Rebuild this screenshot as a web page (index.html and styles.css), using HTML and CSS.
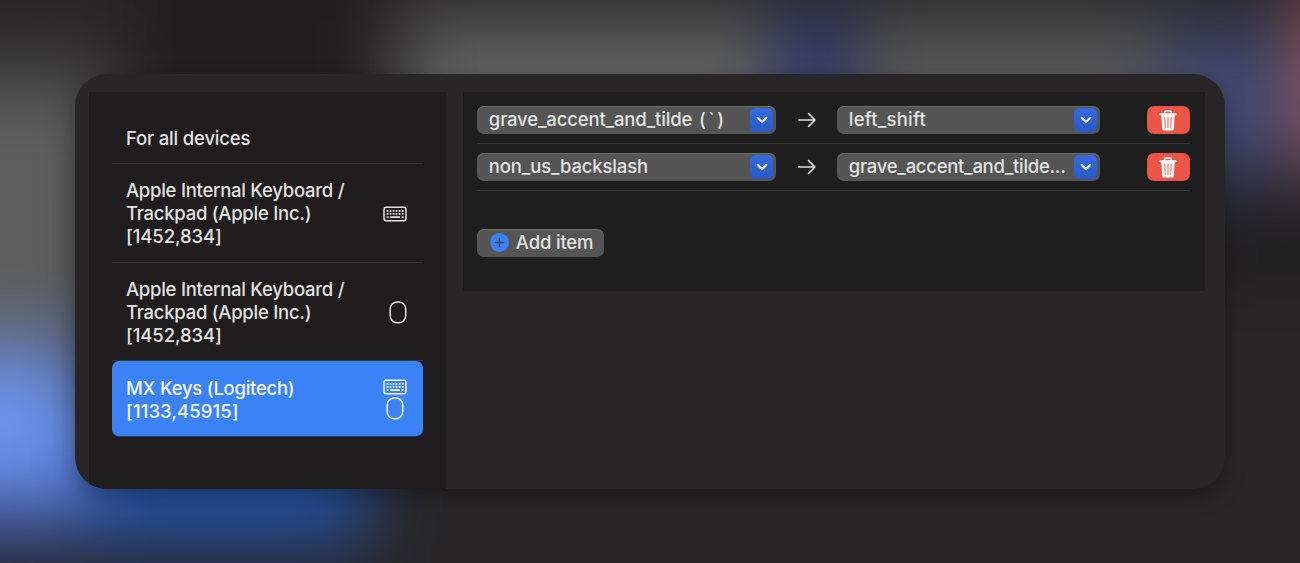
FILE: index.html
```html
<!DOCTYPE html>
<html lang="en">
<head>
<meta charset="utf-8">
<title>Simple modifications</title>
<link rel="stylesheet" href="styles.css">
</head>
<body>
<svg class="defs" width="0" height="0" aria-hidden="true">
  <symbol id="keyboard" viewBox="0 0 24 16">
    <rect x="1" y="1.300" width="22" height="13.400" rx="2.200" fill="none" stroke="currentColor" stroke-width="1.500"/>
    <path d="M3.600 4.800h17M3.600 7.900h17" stroke="currentColor" stroke-width="1.700" stroke-dasharray="1.800 1.240"/>
    <path d="M3.600 11.100h1.800M7 11.100h10M18.700 11.100h1.800" stroke="currentColor" stroke-width="1.600"/>
  </symbol>
  <symbol id="mouse" viewBox="0 0 18 23">
    <rect x="1.200" y="1" width="15.500" height="20.800" rx="7" fill="none" stroke="currentColor" stroke-width="1.500"/>
  </symbol>
  <symbol id="arrow" viewBox="0 0 18 16">
    <path d="M.8 8h16M10.600 1.600 17 8l-6.400 6.400" fill="none" stroke="currentColor" stroke-width="1.500" stroke-linecap="round" stroke-linejoin="round"/>
  </symbol>
  <symbol id="chevron" viewBox="0 0 12 8">
    <path d="M1.700 1.700 6 6.200l4.300-4.500" fill="none" stroke="currentColor" stroke-width="2" stroke-linecap="round" stroke-linejoin="round"/>
  </symbol>
  <symbol id="trash" viewBox="0 0 18 21">
    <path d="M5.700 3.800V2.200Q5.700 1 6.900 1h4.200q1.200 0 1.200 1.200V3.800" fill="none" stroke="currentColor" stroke-width="1.500"/>
    <path d="M1.300 4.200h15.400" stroke="currentColor" stroke-width="2" stroke-linecap="round"/>
    <path fill="currentColor" fill-rule="evenodd" d="M2.300 4.500h13.400l-.9 14.500q-.1 1.600-1.700 1.600H4.900q-1.600 0-1.700-1.600ZM5.300 7l.5 11h.9L6.300 7ZM8.500 7V18h1V7ZM11.700 7 11.300 18h.9l.5-11Z"/>
  </symbol>
</svg>
<svg class="backdrop" viewBox="0 0 1300 563" aria-hidden="true">
  <filter id="soft" filterUnits="userSpaceOnUse" x="-200" y="-200" width="1700" height="960" color-interpolation-filters="sRGB"><feGaussianBlur stdDeviation="36 40"/></filter>
  <g filter="url(#soft)">
    <rect x="-200" y="-200" width="1700" height="960" fill="#282627"/>
    <rect x="140" y="-200" width="240" height="400" fill="#211e1f"/>
    <rect x="-200" y="75" width="310" height="265" fill="#5e5e5e"/>
    <rect x="-200" y="345" width="290" height="158" fill="#6c92ea"/>
    <rect x="90" y="420" width="278" height="122" fill="#2452a8"/>
    <rect x="-200" y="503" width="290" height="48" fill="#304282"/>
    <rect x="400" y="20" width="378" height="200" fill="#636363"/>
    <rect x="778" y="10" width="72" height="210" fill="#28336c"/>
    <rect x="850" y="22" width="310" height="200" fill="#5a5a5a"/>
    <rect x="1160" y="30" width="140" height="144" fill="#404974"/>
    <rect x="1297" y="-10" width="200" height="180" fill="#985052"/>
    <rect x="1200" y="200" width="300" height="70" fill="#1d1c1d"/>
  </g>
</svg>
<main class="window">
  <nav class="sidebar">
    <div class="device device-all"><span class="name">For all devices</span></div>
    <div class="device">
      <span class="name">Apple Internal Keyboard /<br>Trackpad (Apple Inc.)<br><span class="ids">[1452,834]</span></span>
      <span class="icons"><svg class="keyboard"><use href="#keyboard"/></svg></span>
    </div>
    <div class="device">
      <span class="name">Apple Internal Keyboard /<br>Trackpad (Apple Inc.)<br><span class="ids">[1452,834]</span></span>
      <span class="icons"><svg class="mouse"><use href="#mouse"/></svg></span>
    </div>
    <div class="device selected">
      <span class="name">MX Keys (Logitech)<br><span class="ids">[1133,45915]</span></span>
      <span class="icons"><svg class="keyboard"><use href="#keyboard"/></svg><svg class="mouse"><use href="#mouse"/></svg></span>
    </div>
  </nav>
  <section class="content">
    <div class="mapping">
      <button class="select from"><span>grave_accent_and_tilde <span class="symbol">(`)</span></span><i class="cap"><svg><use href="#chevron"/></svg></i></button>
      <svg class="arrow"><use href="#arrow"/></svg>
      <button class="select to"><span class="wide">left_shift</span><i class="cap"><svg><use href="#chevron"/></svg></i></button>
      <button class="delete"><svg><use href="#trash"/></svg></button>
    </div>
    <div class="mapping">
      <button class="select from"><span>non_us_backslash</span><i class="cap"><svg><use href="#chevron"/></svg></i></button>
      <svg class="arrow"><use href="#arrow"/></svg>
      <button class="select to"><span class="clipped">grave_accent_and_tilde...</span><i class="cap"><svg><use href="#chevron"/></svg></i></button>
      <button class="delete"><svg><use href="#trash"/></svg></button>
    </div>
    <button class="add">
      <svg viewBox="0 0 19 19"><circle cx="9.500" cy="9.500" r="9.400" fill="#3b82f7"/><path d="M5.300 9.500h8.400M9.500 5.300v8.400" stroke="#3c4658" stroke-width="1.400" stroke-linecap="round"/></svg>
      <span>Add item</span>
    </button>
  </section>
</main>
</body>
</html>
```
FILE: styles.css
```css
* { box-sizing: border-box; }

body {
  margin: 0;
  width: 1300px;
  height: 563px;
  padding: 74px 75.500px 0 74.500px;
  overflow: hidden;
  font: 450 18.500px/23px Inter, "Liberation Sans", sans-serif;
  letter-spacing: -0.260px;
  color: #e2e2e2;
  background: #282627;
}

.defs { position: absolute; }
svg { display: block; flex: none; }

.backdrop {
  position: absolute;
  top: 0;
  left: 0;
  width: 1300px;
  height: 563px;
}

.window {
  position: relative;
  display: flex;
  align-items: flex-start;
  width: 1150px;
  height: 414.500px;
  padding: 17.500px 20px 0 14.500px;
  border-radius: 32px;
  overflow: hidden;
  background: #282627;
  box-shadow: 0 8px 22px rgba(0, 0, 0, .3);
}

.sidebar {
  width: 357px;
  height: 397px;
  padding: 21.500px 23px 0 22.500px;
  background: #1f1d1d;
}

.device {
  display: flex;
  align-items: center;
  justify-content: space-between;
  height: 98.500px;
  padding: 2px 16px 0 14.500px;
  border-bottom: 1px solid #363636;
}
.device-all { height: 51px; padding-top: 0; letter-spacing: -.180px; }
.selected {
  height: 74.500px;
  padding-top: 2.500px;
  border-bottom: 0;
  background: #3b82f7;
  box-shadow: 0 1px #2b3d5c;
  color: #f4f8ff;
  border-radius: 7px;
}
.ids { letter-spacing: -.100px; }
.selected .ids { letter-spacing: .080px; }
.icons { display: flex; flex-direction: column; align-items: center; }
.keyboard { width: 24px; height: 16px; }
.mouse { width: 18px; height: 23px; }
.selected .mouse { margin-top: 1.500px; }

.content {
  width: 742px;
  height: 199.500px;
  margin-left: 17px;
  padding: 5.500px 14.500px 0;
  background: #1e1e1e;
}

.mapping {
  display: flex;
  align-items: center;
  height: 47px;
  border-bottom: 1px solid #363636;
}

button {
  border: 0;
  padding: 0;
  font: inherit;
  letter-spacing: inherit;
  color: inherit;
}

.select {
  display: flex;
  align-items: center;
  justify-content: space-between;
  height: 28.500px;
  padding: 0 2.500px 0 11.500px;
  border-radius: 7px;
  background: #555;
  box-shadow: inset 0 1px #6c6c6c;
  letter-spacing: -.160px;
}
.select > span { margin-top: -1.500px; white-space: nowrap; }
.symbol { margin-left: 2px; letter-spacing: 2.600px; }
.select .clipped { letter-spacing: -.280px; }
.select .wide { letter-spacing: .200px; }
.from { width: 298.500px; }
.to { width: 262.500px; }

.cap {
  display: flex;
  align-items: center;
  justify-content: center;
  width: 23.500px;
  height: 24px;
  border-radius: 5.500px;
  background: linear-gradient(#356ae0, #2a59c6);
  color: #f2f2f2;
}
.cap svg { width: 12px; height: 8px; }

.arrow { width: 18px; height: 16px; margin: 0 21.500px 0 22px; }

.delete {
  display: flex;
  align-items: center;
  justify-content: center;
  width: 43.500px;
  height: 28.500px;
  margin-left: auto;
  border-radius: 7px;
  background: #eb5545;
  color: #fff;
}
.delete svg { width: 18px; height: 21px; }

.add {
  display: flex;
  align-items: center;
  gap: 7px;
  width: 127px;
  height: 28.500px;
  margin-top: 37.500px;
  padding-left: 12.500px;
  border-radius: 7px;
  background: #555;
  box-shadow: inset 0 1px #6c6c6c;
  letter-spacing: -.180px;
  white-space: nowrap;
}
.add svg { width: 19px; height: 19px; }
```
